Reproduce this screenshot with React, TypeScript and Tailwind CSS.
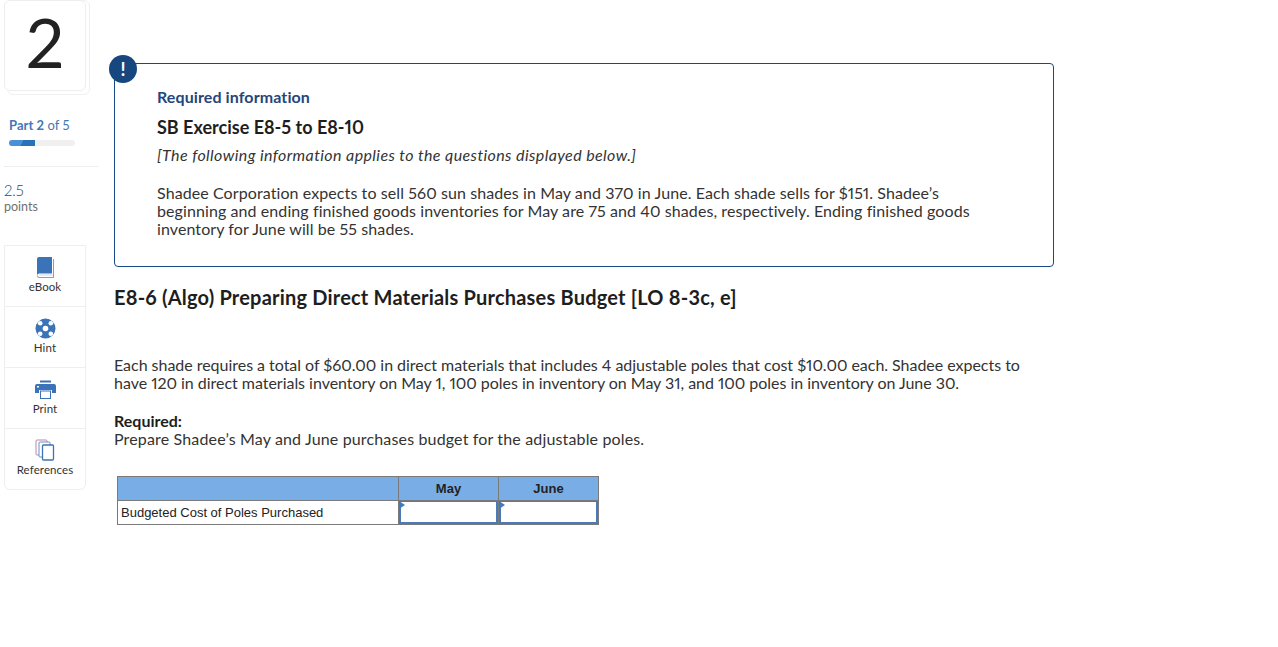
import React from "react";

const Book = () => (
  <svg width="20" height="22" viewBox="0 0 20 22">
    <path d="M2 3A2 2 0 0 1 4 1H17v16.500H4.500A2.500 2.500 0 0 0 2 20Z" fill="#3b73b9" />
    <path d="M18 3h1v19H4.500A2.500 2.500 0 0 1 2 19.500h1A1.500 1.500 0 0 0 4.500 21H18Z" fill="#b58ab0" />
    <path d="M4.500 18.500H18v1H4.500a.5.5 0 0 1 0-1Z" fill="#cfd8ea" />
  </svg>
);
const Hint = () => (
  <svg width="21" height="21" viewBox="0 0 21 21">
    <circle cx="10.500" cy="10.500" r="10" fill="#3b73b9" />
    <circle cx="10.500" cy="10.500" r="2.800" fill="#fff" />
    <circle cx="5.200" cy="5.200" r="2.300" fill="#fff" />
    <circle cx="15.800" cy="5.200" r="2.300" fill="#fff" />
    <circle cx="5.200" cy="15.800" r="2.300" fill="#fff" />
    <circle cx="15.800" cy="15.800" r="2.300" fill="#fff" />
  </svg>
);
const Printer = () => (
  <svg width="21" height="19" viewBox="0 0 21 19">
    <rect x="5" y="0.500" width="11" height="2" fill="#3b73b9" />
    <path d="M2 4h17a2 2 0 0 1 2 2v7h-4V10H4v3H0V6a2 2 0 0 1 2-2Z" fill="#3b73b9" />
    <rect x="2" y="6" width="2" height="1.500" fill="#fff" />
    <rect x="5.500" y="11" width="10" height="7.500" fill="#fff" stroke="#3b73b9" />
  </svg>
);
const Pages = () => (
  <svg width="20" height="22" viewBox="0 0 20 22">
    <rect x="1" y="1" width="11" height="15" rx="1" fill="#fff" stroke="#b58ab0" />
    <rect x="4" y="3" width="11" height="15" rx="1" fill="#fff" stroke="#6d8fc4" />
    <rect x="7.500" y="6" width="11" height="15" rx="1" fill="#fff" stroke="#3b73b9" strokeWidth="1.300" />
  </svg>
);

const tools = [
  { label: "eBook", icon: <Book /> },
  { label: "Hint", icon: <Hint /> },
  { label: "Print", icon: <Printer /> },
  { label: "References", icon: <Pages /> },
];

export default function App() {
  return (
    <div className="flex min-h-[647px] bg-white text-[#2d2d2d] font-['Lato','Open_Sans',sans-serif] proportional-nums [font-variant-ligatures:none]">
      <aside className="w-[94px] ml-[4px] mr-[16px] shrink-0">
        <div className="relative w-[82px] h-[91px] -mb-[4px]">
          <div className="absolute left-[3px] top-0 w-[83px] h-[95px] rounded-[6px] border border-[#f0f0f0]" />
          <div className="relative flex h-[91px] items-center justify-center rounded-[6px] border border-[#eeeeee] bg-white pb-[7px] text-[68px] leading-none font-normal text-[#222222]">
            2
          </div>
        </div>
        <div className="pl-[5px] pt-[30px] text-[13px] tracking-[0.05px] leading-[16px] text-[#4478b5]">
          <span className="font-bold">Part 2</span> of 5
        </div>
        <div className="ml-[5px] mt-[7px] flex h-[6px] w-[66px] overflow-hidden rounded-full bg-[#f0f0f0]">
          <div className="h-full w-[26px] bg-[linear-gradient(120deg,#4a90d9_0%,#4a90d9_50%,#2a72b8_50%,#2a72b8_100%)]" />
        </div>
        <div className="mt-[20px] border-t border-[#eeeeee]" />
        <div className="pt-[15px] text-[15px] font-light leading-[16px] text-[#25476f]">2.5</div>
        <div className="mt-[1px] text-[12.500px] leading-[16px] text-[#6f6f6f]">points</div>
        <div className="mt-[30px] w-[82px] overflow-hidden rounded-b-[6px] border border-[#eeeeee]">
          {tools.map((t, i) => (
            <div
              key={t.label}
              className={`flex flex-col items-center justify-end pb-[12px] ${i > 0 ? "h-[61px] border-t border-[#eeeeee]" : "h-[60px]"}`}
            >
              <div className="flex h-[22px] items-center justify-center">{t.icon}</div>
              <div className="mt-[2px] text-[11.500px] tracking-[0.1px] leading-[14px] text-[#333333]">{t.label}</div>
            </div>
          ))}
        </div>
      </aside>

      <main className="w-[940px] shrink-0 pt-[63px]">
        <div className="relative h-[204px] rounded-[4px] border border-[#1a4a85] pl-[42px] pt-[23px]">
          <div className="absolute -left-[6px] -top-[9px] flex h-[28px] w-[28px] items-center justify-center rounded-full bg-[#17477f] text-[18px] font-bold leading-none text-white">
            !
          </div>
          <div className="text-[16px] tracking-[0.1px] font-bold leading-[20px] text-[#27457a]">Required information</div>
          <div className="mt-[10px] text-[18px] font-bold leading-[20px] text-[#1e1e1e]">SB Exercise E8-5 to E8-10</div>
          <div className="mt-[8px] text-[16px] tracking-[0.4px] italic leading-[20px] text-[#333333]">
            [The following information applies to the questions displayed below.]
          </div>
          <p className="mt-[19px] w-[830px] text-[16px] tracking-[0.09px] leading-[18px] text-[#333333]">
            Shadee Corporation expects to sell 560 sun shades in May and 370 in June. Each shade sells for $151. Shadee’s beginning and ending finished goods inventories for May are 75 and 40 shades, respectively. Ending finished goods inventory for June will be 55 shades.
          </p>
        </div>
        <h1 className="mt-[18px] text-[20px] tracking-[0.2px] font-bold leading-[24px] text-[#1e1e1e]">
          E8-6 (Algo) Preparing Direct Materials Purchases Budget [LO 8-3c, e]
        </h1>
        <p className="mt-[47px] w-[930px] text-[16px] tracking-[-0.03px] leading-[18px] text-[#333333]">
          Each shade requires a total of $60.00 in direct materials that includes 4 adjustable poles that cost $10.00 each. Shadee expects to have 120 in direct materials inventory on May 1, 100 poles in inventory on May 31, and 100 poles in inventory on June 30.
        </p>
        <p className="mt-[20px] text-[16px] font-bold leading-[18px] text-[#1e1e1e]">Required:</p>
        <p className="text-[16px] tracking-[0.15px] leading-[18px] text-[#333333]">
          Prepare Shadee’s May and June purchases budget for the adjustable poles.
        </p>
        <table className="ml-[3px] mt-[28px] w-[482px] table-fixed border-collapse font-['Liberation_Sans',sans-serif] text-[13px] text-[#222222]">
          <thead>
            <tr className="h-[24px] bg-[#79ade6]">
              <th className="w-[281px] border border-[#7a7a7a]" />
              <th className="w-[100px] border border-[#7a7a7a] font-bold">May</th>
              <th className="w-[100px] border border-[#7a7a7a] font-bold">June</th>
            </tr>
          </thead>
          <tbody>
            <tr className="h-[24px]">
              <td className="border border-[#7a7a7a] pl-[3px]">Budgeted Cost of Poles Purchased</td>
              {[0, 1].map((k) => (
                <td key={k} className="border border-[#7a7a7a] p-0">
                  <div className="relative h-[23px] border-x-2 border-b-2 border-t border-[#4a7ab8]">
                    <span className="absolute -left-[2px] -top-[1px] h-0 w-0 border-y-[4px] border-l-[6px] border-y-transparent border-l-[#3f79c2]" />
                  </div>
                </td>
              ))}
            </tr>
          </tbody>
        </table>
      </main>
    </div>
  );
}
